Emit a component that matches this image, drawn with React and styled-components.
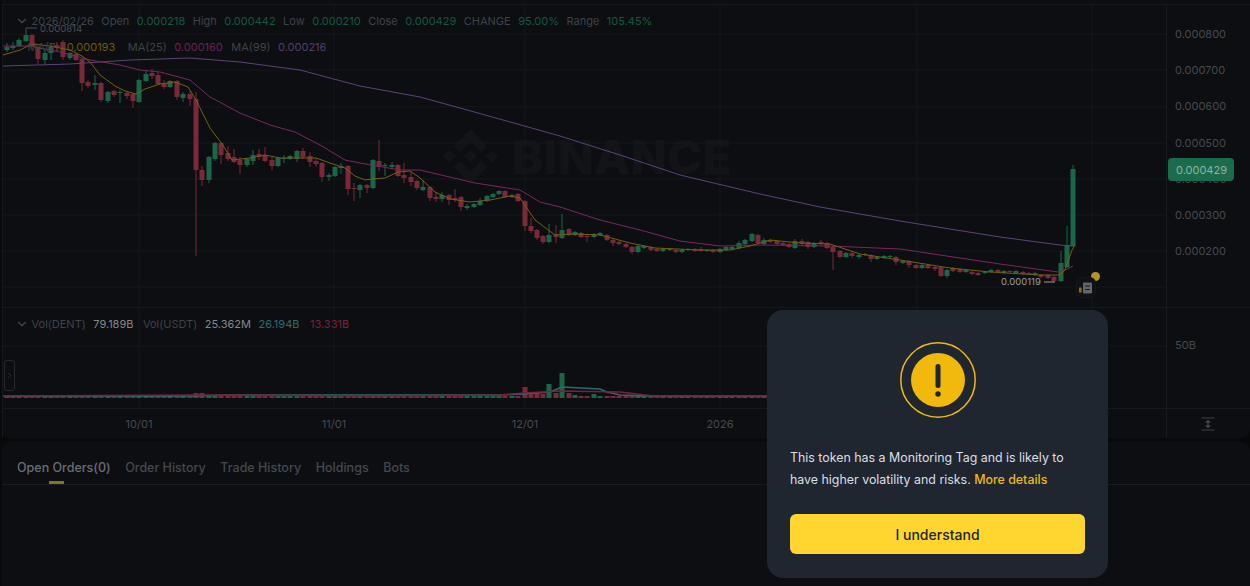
import React from 'react';
import styled, { createGlobalStyle } from 'styled-components';
import { ChevronDown, ChevronRight } from 'lucide-react';
import { SiBinance } from 'react-icons/si';

const GlobalStyle = createGlobalStyle`
  html, body {
    margin: 0;
    padding: 0;
    background: #08090b;
    font-family: Inter, "Liberation Sans", sans-serif;
  }
`;

const UP = '#186848';
const DOWN = '#7b2839';
const UP_TEXT = '#14583f';

// x, up?, body top, body bottom, high, low
const candles = [
  [7,1,47,50,43,52],[13,1,46,48,42,50],[19,1,40,46,38,47],[26,1,35,41,28,42],[32,0,35,46,34,47],[38,0,47,59,46,64],
  [45,1,53,60,50,64],[51,1,47,53,44,60],[57,0,45,48,43,52],[63,0,42,57,40,60],[70,1,53,58,52,60],[76,0,54,60,53,61],
  [82,0,59,83,58,91],[88,0,82,86,80,88],[95,1,83,85,75,90],[101,0,83,100,82,102],[108,1,92,101,91,103],[114,0,91,95,90,97],
  [120,1,92,93,90,103],[127,0,93,96,91,99],[133,0,94,101,93,108],[139,1,80,102,79,103],[146,1,74,81,71,82],[152,0,73,76,69,79],
  [158,0,75,84,72,85],[164,0,83,87,80,89],[170,1,81,87,80,88],[177,0,81,97,80,100],[183,1,94,98,92,102],[190,0,94,99,91,106],
  [196,0,99,170,92,256],[202,0,170,180,166,186],[209,1,157,180,156,183],[215,1,143,159,142,161],[221,0,143,155,142,164],
  [228,0,153,159,146,161],[234,0,157,162,149,163],[240,0,160,165,157,174],[247,1,159,165,158,167],[253,1,155,161,150,165],
  [259,0,154,157,149,160],[265,0,155,161,147,162],[272,0,160,166,157,170],[278,1,158,166,157,167],[284,1,158,159,155,163],
  [290,1,156,159,155,160],[297,1,151,159,150,162],[303,0,151,157,148,159],[310,0,156,162,152,167],[316,0,161,164,159,167],
  [322,0,163,177,162,182],[329,1,175,177,173,181],[335,1,167,176,166,177],[341,1,166,168,163,174],[348,0,166,189,165,195],
  [354,0,188,189,183,201],[360,1,185,190,184,198],[367,0,185,188,184,193],[373,1,160,188,159,189],[379,0,161,167,140,171],
  [385,1,165,166,163,176],[392,1,165,167,162,169],[398,0,165,176,164,177],[404,0,175,178,163,183],[411,0,177,182,172,186],
  [417,0,181,188,180,190],[423,1,187,190,180,191],[430,0,187,198,186,201],[436,0,197,199,192,202],[442,1,195,199,192,202],
  [449,0,195,200,194,205],[455,0,198,200,189,202],[461,0,197,207,196,211],[467,1,206,208,204,210],[474,1,204,207,203,208],
  [480,1,201,205,198,206],[487,1,196,201,195,202],[493,1,194,197,193,198],[499,1,191,194,190,195],[505,0,191,197,190,198],
  [512,1,195,197,194,198],[518,0,194,201,193,202],[525,0,201,226,200,231],[531,0,226,231,218,233],[537,0,230,238,229,240],
  [543,0,236,242,235,244],[549,1,235,242,224,243],[556,0,234,237,225,243],[562,1,230,238,214,239],[569,0,229,235,228,236],
  [575,1,232,235,231,236],[581,0,233,237,232,238],[587,0,236,237,235,242],[594,1,234,237,233,238],[600,1,233,235,232,236],
  [607,0,235,240,234,241],[613,0,240,243,239,246],[619,0,242,244,241,245],[626,0,244,247,243,248],[632,0,247,252,246,254],
  [638,1,246,252,245,253],[644,1,246,248,245,249],[651,0,247,250,246,251],[657,0,249,251,248,252],[663,1,249,251,248,252],
  [670,1,249,250,248,251],[676,0,250,252,249,253],[682,1,250,252,249,253],[688,1,249,250,248,251],[695,0,249,251,248,252],
  [701,0,249,251,247,252],[707,1,250,251,249,252],[713,0,250,252,249,253],[720,1,249,252,248,253],[726,1,247,250,246,251],
  [732,1,247,249,246,250],[739,1,243,248,241,249],[745,1,240,244,239,245],[752,1,234,241,233,242],[758,0,235,243,234,244],
  [764,1,240,244,238,245],[770,0,240,242,239,243],[777,0,241,244,240,245],[783,0,243,245,242,246],[789,0,244,247,243,248],
  [795,1,241,248,239,249],[802,0,241,244,239,245],[808,0,242,247,241,249],[814,1,243,247,242,248],[821,0,242,244,240,245],
  [827,0,243,248,242,249],[833,0,247,252,246,270],[840,0,251,257,250,258],[846,1,253,257,252,258],[852,0,253,256,251,258],
  [859,1,255,257,254,259],[865,1,254,255,253,256],[871,0,255,259,254,262],[877,1,257,259,256,260],[884,1,256,258,255,259],
  [890,1,256,257,255,258],[896,0,257,262,256,265],[903,1,261,263,260,264],[909,0,261,265,260,268],[916,0,265,268,264,269],
  [922,1,265,268,264,269],[928,0,265,268,264,269],[935,0,267,269,266,271],[941,0,267,276,266,277],[947,1,270,276,269,278],
  [953,0,268,271,267,272],[960,0,269,272,268,273],[966,1,270,272,269,273],[972,0,272,274,271,275],[978,0,273,275,272,276],
  [985,1,272,273,271,274],[991,1,270,272,269,273],[998,0,270,272,269,273],[1004,1,271,273,270,274],[1010,0,271,272,270,273],
  [1016,1,271,273,270,274],[1023,0,272,274,271,275],[1029,0,273,274,272,275],[1035,1,273,275,272,276],[1041,0,275,277,274,278],
  [1048,0,275,278,274,279],[1054,0,277,281,276,282],[1061,1,263,281,251,282],[1067,1,245,267,226,268],[1073,1,169,246,165,247],
];

const ma7 = '3,55 20,50 32,44 50,46 70,50 82,56 90,62 100,75 115,86 125,91 136,94 145,89 160,84 175,82 188,87 196,100 210,128 222,144 232,160 250,158 265,155 280,158 300,158 316,158 330,163 345,168 355,176 365,180 372,179 385,178 398,172 410,171 420,178 435,192 450,199 470,202 490,200 510,196 520,198 535,220 555,235 575,234 600,235 630,243 655,248 700,250 730,250 750,246 770,240 800,243 830,244 860,254 900,260 950,268 990,272 1040,275 1060,275 1065,270 1072,250 1075,245';
const ma25 = '3,46 30,46 60,52 90,60 120,65 140,70 160,72 190,80 210,97 240,113 270,125 295,132 320,145 345,160 360,163 400,170 420,170 475,183 520,190 540,202 560,207 600,220 640,230 680,241 720,246 760,245 830,246 900,249 940,255 1000,264 1058,272 1065,270 1073,266';
const ma99 = '3,66 70,64 130,60 190,58 240,62 300,70 360,86 420,97 460,108 503,120 560,136 620,155 680,175 760,194 820,207 900,221 1000,237 1060,245 1073,246';

const bigVolumes = {
  196: 5, 202: 5, 209: 2, 215: 2, 221: 3, 228: 3, 234: 2, 379: 3, 525: 11, 531: 5, 537: 6, 543: 4, 549: 14, 556: 5, 562: 25,
  569: 5, 575: 3, 581: 2, 587: 2, 594: 4, 600: 2,
};
const volMa = '3,396 190,396 230,395 380,395 500,395 524,394 550,392 562,387 600,389 607,392 620,395 650,396 1075,396';
const volMaLong = '3,396 190,395 380,396 500,395 524,393 560,391 620,392 645,395 655,396 1075,396';

const priceRows = [34, 70, 107, 143, 179, 215, 251, 287];
const verticalLines = [139, 334, 525, 720, 917, 1092];

const Page = styled.div`
  position: relative;
  width: 1250px;
  height: 586px;
  overflow: hidden;
  background: #08090b;
`;

const ChartPanel = styled.section`
  display: grid;
  grid-template-columns: 1164px 84px;
  grid-template-rows: 303px 101px 30px;
  height: 434px;
  margin-left: 2px;
  padding-top: 4px;
  background: #0d0e12;
  border-radius: 0 0 8px 8px;
`;

const Pane = styled.div`
  position: relative;
  border-top: 1px solid #17191e;
  border-left: 1px solid #17191e;
  box-sizing: border-box;
  svg.plot {
    position: absolute;
    inset: 0;
  }
`;

const Axis = styled.div`
  display: flex;
  flex-direction: column;
  box-sizing: border-box;
  position: relative;
  padding: ${(p) => p.$top}px 0 0 8px;
  border-top: 1px solid #17191e;
  border-left: 1px solid #17191e;
`;

const AxisLabel = styled.div`
  height: 36.2px;
  line-height: 36px;
  flex: none;
  font-size: 11px;
  color: #46494e;
`;

const PriceTag = styled.div`
  position: absolute;
  left: 1px;
  top: 153px;
  width: 66px;
  height: 23px;
  line-height: 24px;
  box-sizing: border-box;
  padding-left: 8px;
  border-radius: 4px;
  background: #1b6b4d;
  color: #90b3a4;
  font-size: 11px;
`;

const Legend = styled.div`
  position: absolute;
  left: 12px;
  top: ${(p) => p.$top}px;
  display: flex;
  align-items: center;
  gap: 7.5px;
  height: 16px;
  font-size: 11px;
  color: #3f4247;
  white-space: nowrap;
  svg {
    color: #44474c;
    margin-right: -5px;
  }
`;

const LegendSpacer = styled.span`
  width: 5px;
`;

const LegendValue = styled.span`
  color: ${(p) => p.$color};
  margin-right: ${(p) => p.$after ?? 0}px;
`;

const Watermark = styled.div`
  position: absolute;
  left: 440px;
  top: 122px;
  display: flex;
  align-items: center;
  gap: 14px;
  color: #131418;
  font-size: 47px;
  line-height: 56px;
  font-weight: 800;
  letter-spacing: 0.5px;
`;

const WatermarkWord = styled.span`
  padding-top: 2px;
`;

const NotePin = styled.div`
  position: absolute;
  left: 1073px;
  top: 272px;
  width: 20px;
  height: 21px;
  display: flex;
  align-items: center;
  justify-content: center;
  box-sizing: border-box;
  background: #101116;
  border: 1px solid #15171b;
  border-radius: 6px;
`;

const PinDot = styled.div`
  position: absolute;
  left: 1088px;
  top: 267px;
  width: 9px;
  height: 9px;
  border-radius: 50%;
  background: #b4951f;
`;

const CollapseHandle = styled.div`
  position: absolute;
  left: 1px;
  top: 52px;
  width: 11px;
  height: 31px;
  display: flex;
  align-items: center;
  justify-content: center;
  box-sizing: border-box;
  border: 1px solid #26282d;
  border-radius: 3px;
  color: #3c3f44;
`;

const TimeAxis = styled.div`
  display: flex;
  align-items: center;
  padding-left: 36px;
  border-top: 1px solid #17191e;
  border-left: 1px solid #17191e;
`;

const TimeLabel = styled.div`
  width: ${(p) => p.$width}px;
  text-align: center;
  font-size: 11px;
  color: #46494e;
`;

const Corner = styled.div`
  display: flex;
  align-items: center;
  padding-left: 34px;
  border-top: 1px solid #17191e;
  border-left: 1px solid #17191e;
`;

const OrdersPanel = styled.section`
  position: relative;
  height: 144px;
  margin: 4px 0 0 2px;
  background: #0d0e12;
  border-radius: 8px 8px 0 0;
`;

const Tabs = styled.nav`
  display: flex;
  align-items: center;
  gap: 14.6px;
  height: 42px;
  padding-left: 15px;
  border-bottom: 1px solid #1a1c21;
`;

const Tab = styled.div`
  position: relative;
  height: 100%;
  line-height: 51px;
  font-size: 12.5px;
  font-weight: 500;
  color: ${(p) => (p.$active ? '#6a6d72' : '#45484e')};
  &::after {
    content: '';
    display: ${(p) => (p.$active ? 'block' : 'none')};
    position: absolute;
    left: 32px;
    bottom: 0;
    width: 15px;
    height: 3px;
    background: #8a7315;
  }
`;

const Dialog = styled.div`
  position: absolute;
  left: 767px;
  top: 310px;
  width: 341px;
  height: 268px;
  box-sizing: border-box;
  padding: 32px 23px 24px;
  display: flex;
  flex-direction: column;
  align-items: center;
  background: #1f2630;
  border-radius: 16px;
`;

const DialogText = styled.p`
  width: 100%;
  margin: 29px 0 23px;
  font-size: 12.4px;
  line-height: 22px;
  color: #dcdfe4;
`;

const DetailsLink = styled.a`
  color: #f0b90b;
  font-weight: 500;
`;

const UnderstandButton = styled.button`
  width: 295px;
  height: 40px;
  border: 0;
  border-radius: 6px;
  background: #ffd630;
  color: #202630;
  font-family: inherit;
  font-size: 14px;
  font-weight: 500;
`;

const Candle = ({ c }) => {
  const [x, up, top, bottom, high, low] = c;
  const color = up ? UP : DOWN;
  return (
    <g>
      <rect x={x - 0.5} y={high} width={1} height={low - high} fill={color} />
      <rect x={x - 2.5} y={top} width={5} height={Math.max(bottom - top, 1)} fill={color} />
    </g>
  );
};

const PriceChart = () => (
  <svg className="plot" width="1163" height="302" viewBox="3 5 1163 302">
    {priceRows.map((y) => (
      <line key={y} x1="0" x2="1166" y1={y} y2={y} stroke="#14161a" />
    ))}
    {verticalLines.map((x) => (
      <line key={x} x1={x} x2={x} y1="0" y2="307" stroke="#14161a" />
    ))}
    {candles.map((c) => (
      <Candle key={c[0]} c={c} />
    ))}
    <polyline points={ma99} fill="none" stroke="#5b4379" strokeWidth="1" />
    <polyline points={ma25} fill="none" stroke="#7c2560" strokeWidth="1" />
    <polyline points={ma7} fill="none" stroke="#766010" strokeWidth="1" />
    <line x1="26" x2="37" y1="28" y2="28" stroke="#4d4f53" />
    <text x="40" y="32" fontSize="9.5" fill="#4d4f53">0.000814</text>
    <line x1="1044" x2="1055" y1="282" y2="282" stroke="#9b9da1" />
    <text x="1001" y="285" fontSize="9.5" fill="#9b9da1">0.000119</text>
  </svg>
);

const VolumeChart = () => (
  <svg className="plot" width="1163" height="100" viewBox="3 308 1163 100">
    <line x1="0" x2="1166" y1="346" y2="346" stroke="#14161a" />
    {verticalLines.map((x) => (
      <line key={x} x1={x} x2={x} y1="308" y2="408" stroke="#14161a" />
    ))}
    {candles.map(([x, up]) => {
      const h = bigVolumes[x] ?? 2;
      return <rect key={x} x={x - 2.5} y={398 - h} width={5} height={h} fill={up ? UP : DOWN} />;
    })}
    <polyline points={volMa} fill="none" stroke="#2d6b73" strokeWidth="1.5" />
    <polyline points={volMaLong} fill="none" stroke="#7d1f3c" strokeWidth="1.5" />
  </svg>
);

const WarningIcon = () => (
  <svg width="76" height="76" viewBox="0 0 76 76">
    <circle cx="38" cy="38" r="37.2" fill="none" stroke="#f0b90b" strokeWidth="1.5" />
    <circle cx="38" cy="38" r="27" fill="#f0b90b" />
    <rect x="35.5" y="22" width="5" height="24" rx="2.5" fill="#1f2630" />
    <circle cx="38" cy="52" r="2.7" fill="#1f2630" />
  </svg>
);

const NoteIcon = () => (
  <svg width="14" height="14" viewBox="0 0 14 14">
    <rect x="0" y="6.5" width="2.6" height="5" rx="0.6" fill="#8a7315" />
    <rect x="4" y="1.5" width="9" height="11" rx="1" fill="#62656b" />
    <rect x="6" y="4.5" width="5" height="1" fill="#17191e" />
    <rect x="6" y="8" width="5" height="1" fill="#17191e" />
  </svg>
);

const FitIcon = () => (
  <svg width="14" height="14" viewBox="0 0 14 14" fill="none" stroke="#3f4247" strokeWidth="1">
    <line x1="0.5" x2="13.5" y1="1" y2="1" />
    <line x1="0.5" x2="13.5" y1="13" y2="13" />
    <line x1="7" x2="7" y1="3" y2="11" strokeWidth="1.6" />
    <path d="M4.5 5.5 7 3l2.5 2.5M4.5 8.5 7 11l2.5-2.5" fill="#3f4247" />
  </svg>
);

const App = () => (
  <Page>
    <GlobalStyle />
    <ChartPanel>
      <Pane>
        <Watermark>
          <SiBinance size={55} />
          <WatermarkWord>BINANCE</WatermarkWord>
        </Watermark>
        <PriceChart />
        <Legend $top={8}>
          <ChevronDown size={14} />
          <span>2026/02/26</span>
          <span>Open</span>
          <LegendValue $color={UP_TEXT}>0.000218</LegendValue>
          <span>High</span>
          <LegendValue $color={UP_TEXT}>0.000442</LegendValue>
          <span>Low</span>
          <LegendValue $color={UP_TEXT}>0.000210</LegendValue>
          <span>Close</span>
          <LegendValue $color={UP_TEXT}>0.000429</LegendValue>
          <span>CHANGE</span>
          <LegendValue $color={UP_TEXT}>95.00%</LegendValue>
          <span>Range</span>
          <LegendValue $color={UP_TEXT}>105.45%</LegendValue>
        </Legend>
        <Legend $top={34}>
          <LegendSpacer />
          <span>MA(7)</span>
          <LegendValue $color="#6d5a0f" $after={5}>0.000193</LegendValue>
          <span>MA(25)</span>
          <LegendValue $color="#6f2156" $after={1}>0.000160</LegendValue>
          <span>MA(99)</span>
          <LegendValue $color="#533d6e">0.000216</LegendValue>
        </Legend>
        <PinDot />
        <NotePin>
          <NoteIcon />
        </NotePin>
      </Pane>
      <Axis $top={11}>
        {[800, 700, 600, 500, 400, 300, 200].map((v) => (
          <AxisLabel key={v}>{`0.000${v}`}</AxisLabel>
        ))}
        <PriceTag>0.000429</PriceTag>
      </Axis>
      <Pane>
        <VolumeChart />
        <Legend $top={8}>
          <ChevronDown size={14} />
          <span>Vol(DENT)</span>
          <LegendValue $color="#85878b" $after={2}>79.189B</LegendValue>
          <span>Vol(USDT)</span>
          <LegendValue $color="#85878b">25.362M</LegendValue>
          <LegendValue $color="#2d6b73" $after={3}>26.194B</LegendValue>
          <LegendValue $color="#7d1f3c">13.331B</LegendValue>
        </Legend>
        <CollapseHandle>
          <ChevronRight size={11} />
        </CollapseHandle>
      </Pane>
      <Axis $top={19}>
        <AxisLabel>50B</AxisLabel>
      </Axis>
      <TimeAxis>
        <TimeLabel $width={200}>10/01</TimeLabel>
        <TimeLabel $width={190}>11/01</TimeLabel>
        <TimeLabel $width={192}>12/01</TimeLabel>
        <TimeLabel $width={198}>2026</TimeLabel>
      </TimeAxis>
      <Corner>
        <FitIcon />
      </Corner>
    </ChartPanel>
    <OrdersPanel>
      <Tabs>
        <Tab $active>Open Orders(0)</Tab>
        <Tab>Order History</Tab>
        <Tab>Trade History</Tab>
        <Tab>Holdings</Tab>
        <Tab>Bots</Tab>
      </Tabs>
    </OrdersPanel>
    <Dialog>
      <WarningIcon />
      <DialogText>
        This token has a Monitoring Tag and is likely to have higher volatility and risks.{' '}
        <DetailsLink>More details</DetailsLink>
      </DialogText>
      <UnderstandButton>I understand</UnderstandButton>
    </Dialog>
  </Page>
);

export default App;
